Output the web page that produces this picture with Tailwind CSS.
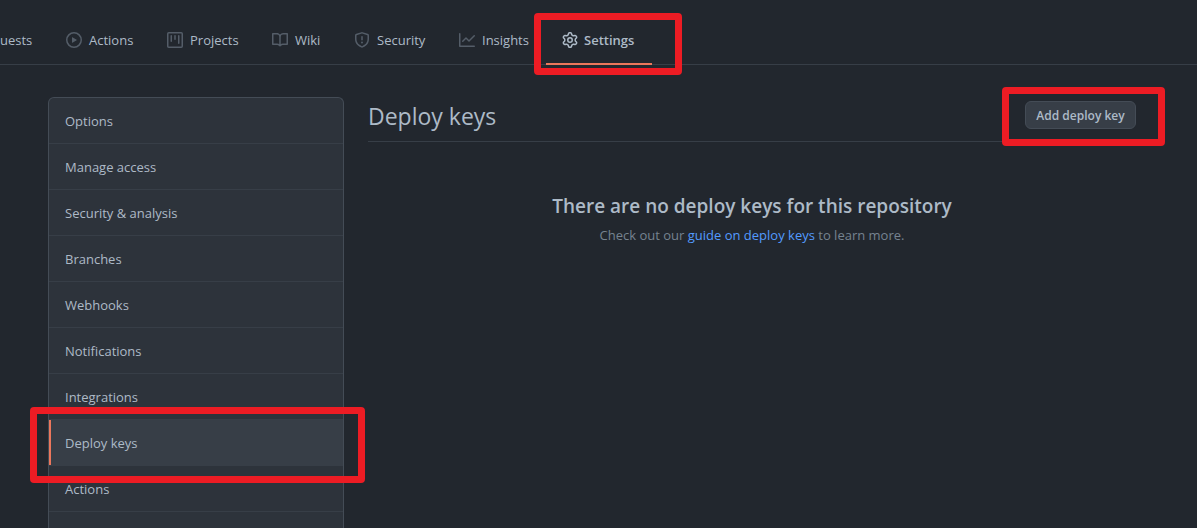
<!DOCTYPE html>
<html lang="en">
<head>
<meta charset="utf-8">
<meta name="viewport" content="width=device-width, initial-scale=1">
<title>Deploy keys</title>
<script src="https://cdn.jsdelivr.net/npm/@tailwindcss/browser@4"></script>
</head>
<body class="flex h-screen flex-col overflow-hidden bg-[#22272e] font-['Segoe_UI','Open_Sans',sans-serif] text-[13px] leading-5 text-[#adbac7]">
<header class="shrink-0 border-b border-[#373e47] pt-[15px]">
  <nav aria-label="Repository" class="-mb-px flex h-[50px]">
    <a href="#" class="flex w-[50px] shrink-0 items-center">uests</a>
    <a href="#" class="flex w-[101px] shrink-0 items-center gap-[7px] pl-4">
      <svg class="size-4 shrink-0 fill-[#545d68]" viewBox="0 0 16 16" aria-hidden="true"><path fill-rule="evenodd" d="M1.5 8a6.5 6.5 0 1113 0 6.5 6.5 0 01-13 0zM8 0a8 8 0 100 16A8 8 0 008 0zM6.379 5.227A.25.25 0 006 5.442v5.117a.25.25 0 00.379.214l4.264-2.559a.25.25 0 000-.428L6.379 5.227z"/></svg>
      Actions</a>
    <a href="#" class="flex w-[105px] shrink-0 items-center gap-[7px] pl-4">
      <svg class="size-4 shrink-0 fill-[#545d68]" viewBox="0 0 16 16" aria-hidden="true"><path fill-rule="evenodd" d="M1.75 0A1.75 1.75 0 000 1.75v12.5C0 15.216.784 16 1.75 16h12.5A1.75 1.75 0 0016 14.25V1.75A1.75 1.75 0 0014.25 0H1.75zM1.5 1.75a.25.25 0 01.25-.25h12.5a.25.25 0 01.25.25v12.5a.25.25 0 01-.25.25H1.75a.25.25 0 01-.25-.25V1.75zM11.75 3a.75.75 0 00-.75.75v7.5a.75.75 0 001.5 0v-7.5a.75.75 0 00-.75-.75zm-8.25.75a.75.75 0 011.5 0v5.5a.75.75 0 01-1.5 0v-5.5zM8 3a.75.75 0 00-.75.75v3.5a.75.75 0 001.5 0v-3.5A.75.75 0 008 3z"/></svg>
      Projects</a>
    <a href="#" class="flex w-[82px] shrink-0 items-center gap-[7px] pl-4">
      <svg class="size-4 shrink-0 fill-[#545d68]" viewBox="0 0 16 16" aria-hidden="true"><path fill-rule="evenodd" d="M0 1.75A.75.75 0 01.75 1h4.253c1.227 0 2.317.59 3 1.501A3.744 3.744 0 0111.006 1h4.245a.75.75 0 01.75.75v10.5a.75.75 0 01-.75.75h-4.507a2.25 2.25 0 00-1.591.659l-.622.621a.75.75 0 01-1.06 0l-.622-.621A2.25 2.25 0 005.258 13H.75a.75.75 0 01-.75-.75V1.75zm8.755 3a2.25 2.25 0 012.25-2.25H14.5v9h-3.757c-.71 0-1.4.201-1.992.572l.004-7.322zm-1.504 7.324l.004-5.073-.002-2.253A2.25 2.25 0 005.003 2.5H1.5v9h3.757a3.75 3.75 0 011.994.574z"/></svg>
      Wiki</a>
    <a href="#" class="flex w-[105px] shrink-0 items-center gap-[7px] pl-4">
      <svg class="size-4 shrink-0 fill-[#545d68]" viewBox="0 0 16 16" aria-hidden="true"><path fill-rule="evenodd" d="M7.467.133a1.75 1.75 0 011.066 0l5.25 1.68A1.75 1.75 0 0115 3.48V7c0 1.566-.32 3.182-1.303 4.682-.983 1.498-2.585 2.813-5.032 3.855a1.7 1.7 0 01-1.33 0c-2.447-1.042-4.049-2.357-5.032-3.855C1.32 10.182 1 8.566 1 7V3.48a1.75 1.75 0 011.217-1.667l5.25-1.68zm.61 1.429a.25.25 0 00-.153 0l-5.25 1.68a.25.25 0 00-.174.238V7c0 1.358.275 2.666 1.057 3.86.784 1.194 2.121 2.34 4.366 3.297a.2.2 0 00.154 0c2.245-.956 3.582-2.104 4.366-3.298C13.225 9.666 13.5 8.36 13.5 7V3.48a.25.25 0 00-.174-.237l-5.25-1.68zM9 10.5a1 1 0 11-2 0 1 1 0 012 0zm-.25-5.75a.75.75 0 10-1.5 0v3a.75.75 0 001.5 0v-3z"/></svg>
      Security</a>
    <a href="#" class="flex w-[103px] shrink-0 items-center gap-[7px] pl-4">
      <svg class="size-4 shrink-0 fill-[#545d68]" viewBox="0 0 16 16" aria-hidden="true"><path fill-rule="evenodd" d="M1.5 1.75a.75.75 0 00-1.5 0v12.5c0 .414.336.75.75.75h14.5a.75.75 0 000-1.5H1.5V1.75zm14.28 2.53a.75.75 0 00-1.06-1.06L10 7.94 7.53 5.47a.75.75 0 00-1.06 0L3.22 8.72a.75.75 0 001.06 1.06L7 7.06l2.47 2.47a.75.75 0 001.06 0l5.25-5.25z"/></svg>
      Insights</a>
    <a href="#" aria-current="page" class="relative flex w-[106px] shrink-0 items-center gap-[6px] border-b-2 border-[#ec775c] pt-[2px] pl-4 font-semibold">
      <svg class="size-4 shrink-0 fill-[#adbac7]" viewBox="0 0 16 16" aria-hidden="true"><path fill-rule="evenodd" d="M7.429 1.525a6.593 6.593 0 011.142 0c.036.003.108.036.137.146l.289 1.105c.147.56.55.967.997 1.189.174.086.341.183.501.29.417.278.97.423 1.53.27l1.102-.303c.11-.03.175.016.195.046.219.31.41.641.573.989.014.031.022.11-.059.19l-.815.806c-.411.406-.562.957-.53 1.456a4.588 4.588 0 010 .582c-.032.499.119 1.05.53 1.456l.815.806c.08.08.073.159.059.19a6.494 6.494 0 01-.573.99c-.02.029-.086.074-.195.045l-1.103-.303c-.559-.153-1.112-.008-1.529.27-.16.107-.327.204-.5.29-.449.222-.851.628-.998 1.189l-.289 1.105c-.029.11-.101.143-.137.146a6.613 6.613 0 01-1.142 0c-.036-.003-.108-.037-.137-.146l-.289-1.105c-.147-.56-.55-.967-.997-1.189a4.502 4.502 0 01-.501-.29c-.417-.278-.97-.423-1.53-.27l-1.102.303c-.11.03-.175-.016-.195-.046a6.492 6.492 0 01-.573-.989c-.014-.031-.022-.11.059-.19l.815-.806c.411-.406.562-.957.53-1.456a4.587 4.587 0 010-.582c.032-.499-.119-1.05-.53-1.456l-.815-.806c-.08-.08-.073-.159-.059-.19a6.44 6.44 0 01.573-.99c.02-.029.086-.075.195-.045l1.103.303c.559.153 1.112.008 1.529-.27.16-.107.327-.204.5-.29.449-.222.851-.628.998-1.189l.289-1.105c.029-.11.101-.143.137-.146zM8 0c-.236 0-.47.01-.701.03-.743.065-1.29.615-1.458 1.261l-.29 1.106c-.017.066-.078.158-.211.224a5.994 5.994 0 00-.668.386c-.123.082-.233.09-.3.071L3.27 2.776c-.644-.177-1.392.02-1.82.63a7.977 7.977 0 00-.704 1.217c-.315.675-.111 1.422.363 1.891l.815.806c.05.048.098.147.088.294a6.084 6.084 0 000 .772c.01.147-.038.246-.088.294l-.815.806c-.474.469-.678 1.216-.363 1.891.2.428.436.835.704 1.218.428.609 1.176.806 1.82.63l1.103-.303c.066-.019.176-.011.299.071.213.143.436.272.668.386.133.066.194.158.212.224l.289 1.106c.169.646.715 1.196 1.458 1.26a8.094 8.094 0 001.402 0c.743-.064 1.29-.614 1.458-1.26l.29-1.106c.017-.066.078-.158.211-.224a5.98 5.98 0 00.668-.386c.123-.082.233-.09.3-.071l1.102.302c.644.177 1.392-.02 1.82-.63.268-.382.505-.789.704-1.217.315-.675.111-1.422-.364-1.891l-.814-.806c-.05-.048-.098-.147-.088-.294a6.1 6.1 0 000-.772c-.01-.147.039-.246.088-.294l.814-.806c.475-.469.679-1.216.364-1.891a7.992 7.992 0 00-.704-1.218c-.428-.609-1.176-.806-1.82-.63l-1.103.303c-.066.019-.176.011-.299-.071a5.991 5.991 0 00-.668-.386c-.133-.066-.194-.158-.212-.224L10.16 1.29C9.99.645 9.444.095 8.701.031A8.094 8.094 0 008 0zm1.5 8a1.5 1.5 0 11-3 0 1.5 1.5 0 013 0zM11 8a3 3 0 11-6 0 3 3 0 016 0z"/></svg>
      Settings
      <span class="pointer-events-none absolute -top-[2px] -right-[30px] -bottom-[12px] -left-3 z-10 rounded border-7 border-[#ed1c24]"></span></a>
  </nav>
</header>

<div class="flex min-h-0 flex-1 gap-6 pt-8 pr-[61px] pl-12">
  <nav aria-label="Settings" class="w-[296px] shrink-0 rounded-t-md border border-b-0 border-[#444c56] bg-[#2d333b]">
    <a href="#" class="flex h-[46px] items-center border-b border-[#373e47] px-4">Options</a>
    <a href="#" class="flex h-[46px] items-center border-b border-[#373e47] px-4">Manage access</a>
    <a href="#" class="flex h-[46px] items-center border-b border-[#373e47] px-4">Security &amp; analysis</a>
    <a href="#" class="flex h-[46px] items-center border-b border-[#373e47] px-4">Branches</a>
    <a href="#" class="flex h-[46px] items-center border-b border-[#373e47] px-4">Webhooks</a>
    <a href="#" class="flex h-[46px] items-center border-b border-[#373e47] px-4">Notifications</a>
    <a href="#" class="flex h-[46px] items-center border-b border-[#373e47] px-4">Integrations</a>
    <a href="#" aria-current="page" class="relative flex h-[46px] items-center border-b border-[#373e47] bg-[#373e47] px-4">
      <span class="absolute inset-y-0 left-0 w-[2px] bg-[#ec775c]"></span>
      Deploy keys
      <span class="pointer-events-none absolute -top-[13px] -right-[22px] -bottom-[18px] -left-[19px] z-10 rounded border-7 border-[#ed1c24]"></span></a>
    <a href="#" class="flex h-[46px] items-center border-b border-[#373e47] px-4">Actions</a>
  </nav>

  <main class="min-w-0 flex-1">
    <div class="flex h-[45px] items-start justify-between border-b border-[#373e47]">
      <h1 class="pt-[3px] text-[23px] leading-8">Deploy keys</h1>
      <div class="relative mt-1">
        <button type="button" class="h-7 w-[111px] rounded-md border border-[#444c56] bg-[#373e47] pt-px text-[12px] font-semibold">Add deploy key</button>
        <span class="pointer-events-none absolute -top-[14px] -right-[29px] -bottom-[17px] -left-[23px] z-10 rounded border-7 border-[#ed1c24]"></span>
      </div>
    </div>
    <div class="pt-12 text-center">
      <h2 class="text-[19px] leading-8 font-semibold">There are no deploy keys for this repository</h2>
      <p class="mt-[3px] text-[#768390]">Check out our <a href="#" class="text-[#539bff]">guide on deploy keys</a> to learn more.</p>
    </div>
  </main>
</div>
</body>
</html>
